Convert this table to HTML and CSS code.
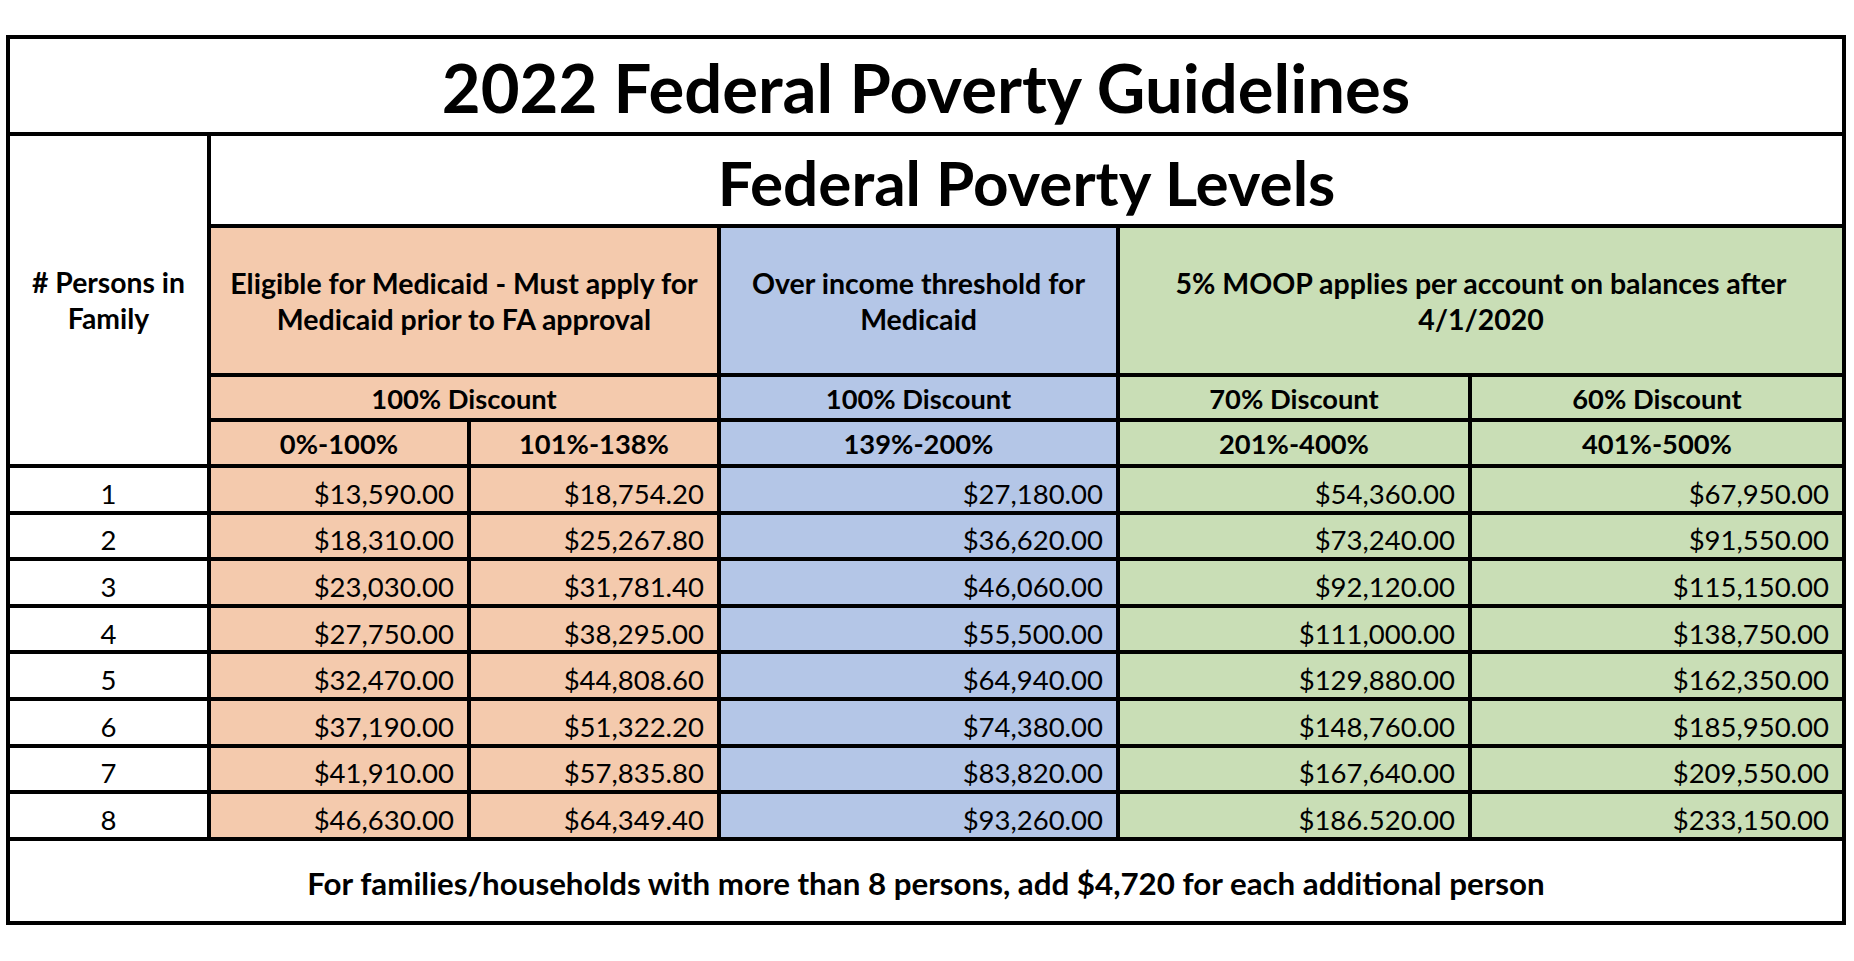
FILE: index.html
```html
<!DOCTYPE html>
<html lang="en">
<head>
<meta charset="utf-8">
<title>2022 Federal Poverty Guidelines</title>
<link rel="stylesheet" href="styles.css">
</head>
<body>
<main class="page">
  <div class="fpl">
    <div class="cell title span-all">2022 Federal Poverty Guidelines</div>

    <div class="cell persons">
      <span># Persons in<br>Family</span>
    </div>
    <div class="cell levels span-5">Federal Poverty Levels</div>

    <div class="cell head peach span-2">Eligible for Medicaid - Must apply for<br>Medicaid prior to FA approval</div>
    <div class="cell head blue">Over income threshold for<br>Medicaid</div>
    <div class="cell head green span-2">5% MOOP applies per account on balances after<br>4/1/2020</div>

    <div class="cell sub peach span-2">100% Discount</div>
    <div class="cell sub blue">100% Discount</div>
    <div class="cell sub green">70% Discount</div>
    <div class="cell sub green">60% Discount</div>

    <div class="cell sub peach">0%-100%</div>
    <div class="cell sub peach">101%-138%</div>
    <div class="cell sub blue">139%-200%</div>
    <div class="cell sub green">201%-400%</div>
    <div class="cell sub green">401%-500%</div>

    <div class="cell num">1</div>
    <div class="cell amt peach">$13,590.00</div>
    <div class="cell amt peach">$18,754.20</div>
    <div class="cell amt blue">$27,180.00</div>
    <div class="cell amt green">$54,360.00</div>
    <div class="cell amt green">$67,950.00</div>

    <div class="cell num">2</div>
    <div class="cell amt peach">$18,310.00</div>
    <div class="cell amt peach">$25,267.80</div>
    <div class="cell amt blue">$36,620.00</div>
    <div class="cell amt green">$73,240.00</div>
    <div class="cell amt green">$91,550.00</div>

    <div class="cell num">3</div>
    <div class="cell amt peach">$23,030.00</div>
    <div class="cell amt peach">$31,781.40</div>
    <div class="cell amt blue">$46,060.00</div>
    <div class="cell amt green">$92,120.00</div>
    <div class="cell amt green">$115,150.00</div>

    <div class="cell num">4</div>
    <div class="cell amt peach">$27,750.00</div>
    <div class="cell amt peach">$38,295.00</div>
    <div class="cell amt blue">$55,500.00</div>
    <div class="cell amt green">$111,000.00</div>
    <div class="cell amt green">$138,750.00</div>

    <div class="cell num">5</div>
    <div class="cell amt peach">$32,470.00</div>
    <div class="cell amt peach">$44,808.60</div>
    <div class="cell amt blue">$64,940.00</div>
    <div class="cell amt green">$129,880.00</div>
    <div class="cell amt green">$162,350.00</div>

    <div class="cell num">6</div>
    <div class="cell amt peach">$37,190.00</div>
    <div class="cell amt peach">$51,322.20</div>
    <div class="cell amt blue">$74,380.00</div>
    <div class="cell amt green">$148,760.00</div>
    <div class="cell amt green">$185,950.00</div>

    <div class="cell num">7</div>
    <div class="cell amt peach">$41,910.00</div>
    <div class="cell amt peach">$57,835.80</div>
    <div class="cell amt blue">$83,820.00</div>
    <div class="cell amt green">$167,640.00</div>
    <div class="cell amt green">$209,550.00</div>

    <div class="cell num">8</div>
    <div class="cell amt peach">$46,630.00</div>
    <div class="cell amt peach">$64,349.40</div>
    <div class="cell amt blue">$93,260.00</div>
    <div class="cell amt green">$186.520.00</div>
    <div class="cell amt green">$233,150.00</div>

    <div class="cell footer span-all">For families/households with more than 8 persons, add $4,720 for each additional person</div>
  </div>
</main>
</body>
</html>
```

FILE: styles.css
```css
html, body {
  margin: 0;
  padding: 0;
  background: #ffffff;
}

body {
  font-family: Lato, "Open Sans", "Liberation Sans", sans-serif;
  color: #000000;
}

.page {
  padding: 35px 0 0 6px;
}

.fpl {
  display: grid;
  width: 1840px;
  box-sizing: border-box;
  background: #000000;
  padding: 4px;
  gap: 4px;
  grid-template-columns: 197px 256px 246px 395px 348px 370px;
  grid-template-rows: 93px 88px 145px 41px 42px repeat(8, 42.6px) 80px;
}

.cell {
  display: flex;
  align-items: center;
  justify-content: center;
  background: #ffffff;
  text-align: center;
  font-size: 27.5px;
  line-height: 36px;
}

.span-all { grid-column: 1 / -1; }
.span-5 { grid-column: 2 / 7; }
.span-2 { grid-column: span 2; }

.title {
  font-size: 67px;
  font-weight: 700;
  line-height: 1;
  padding-top: 4px;
}

.persons {
  grid-row: 2 / 6;
  font-size: 28.3px;
  font-weight: 700;
}

.levels {
  font-size: 62px;
  font-weight: 700;
  line-height: 1;
  padding-top: 4px;
}

.head {
  font-size: 28.5px;
  font-weight: 700;
}

.sub {
  font-size: 27.3px;
  font-weight: 700;
  padding-top: 2px;
}

.num {
  font-weight: 400;
  padding-top: 9px;
}

.amt {
  justify-content: flex-end;
  padding-right: 13px;
  padding-top: 9px;
  font-weight: 400;
}

.footer {
  font-size: 31.3px;
  font-weight: 700;
  padding-top: 4px;
}

.peach { background: #f4caad; }
.blue { background: #b4c6e7; }
.green { background: #c9deb6; }
```
